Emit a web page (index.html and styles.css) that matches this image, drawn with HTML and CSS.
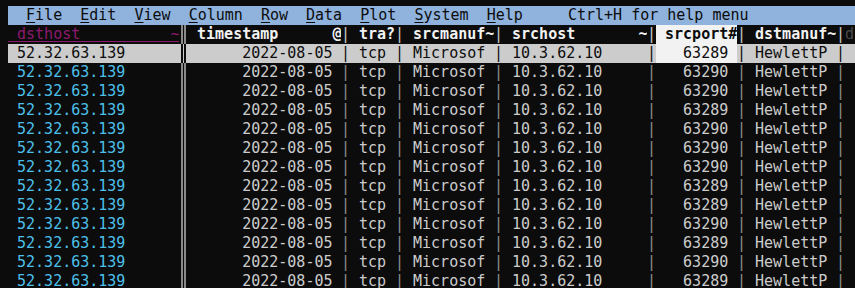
FILE: index.html
```html
<!DOCTYPE html>
<html lang="en">
<head>
    <meta charset="UTF-8">
    <title>vd packets.csv</title>
    <link rel="stylesheet" href="styles.css">
</head>
<body>
    <div class="menubar">  <u>F</u>ile  <u>E</u>dit  <u>V</u>iew  <u>C</u>olumn  <u>R</u>ow  <u>D</u>ata  <u>P</u>lot  <u>S</u>ystem  <u>H</u>elp     Ctrl+H for help menu</div>
    <div class="sheet">
        <div class="row header">
            <span class="key"> dsthost          ~</span><span class="keysep"></span><span> timestamp      @</span><span class="sep">|</span><span> tra?</span><span class="sep">|</span><span> srcmanuf~</span><span class="sep">|</span><span> srchost       ~</span><span class="sep">|</span><span class="cur"> srcport#</span><span class="sep">|</span><span> dstmanuf~</span><span class="sep">|</span><span class="more">d</span>
        </div>
        <div class="row selected">
            <span class="key"> 52.32.63.139</span><span class="keysep"></span><span>      2022-08-05 </span><span class="sep">|</span><span> tcp </span><span class="sep">|</span><span> Microsof </span><span class="sep">|</span><span> 10.3.62.10</span><span class="sep">|</span><span class="cur">   63289 </span><span class="sep">|</span><span> HewlettP </span><span class="sep">|</span><span></span>
        </div>
        <div class="row">
            <span class="key"> 52.32.63.139</span><span class="keysep"></span><span>      2022-08-05 </span><span class="sep">|</span><span> tcp </span><span class="sep">|</span><span> Microsof </span><span class="sep">|</span><span> 10.3.62.10</span><span class="sep">|</span><span>   63290 </span><span class="sep">|</span><span> HewlettP </span><span class="sep">|</span><span></span>
        </div>
        <div class="row">
            <span class="key"> 52.32.63.139</span><span class="keysep"></span><span>      2022-08-05 </span><span class="sep">|</span><span> tcp </span><span class="sep">|</span><span> Microsof </span><span class="sep">|</span><span> 10.3.62.10</span><span class="sep">|</span><span>   63290 </span><span class="sep">|</span><span> HewlettP </span><span class="sep">|</span><span></span>
        </div>
        <div class="row">
            <span class="key"> 52.32.63.139</span><span class="keysep"></span><span>      2022-08-05 </span><span class="sep">|</span><span> tcp </span><span class="sep">|</span><span> Microsof </span><span class="sep">|</span><span> 10.3.62.10</span><span class="sep">|</span><span>   63289 </span><span class="sep">|</span><span> HewlettP </span><span class="sep">|</span><span></span>
        </div>
        <div class="row">
            <span class="key"> 52.32.63.139</span><span class="keysep"></span><span>      2022-08-05 </span><span class="sep">|</span><span> tcp </span><span class="sep">|</span><span> Microsof </span><span class="sep">|</span><span> 10.3.62.10</span><span class="sep">|</span><span>   63290 </span><span class="sep">|</span><span> HewlettP </span><span class="sep">|</span><span></span>
        </div>
        <div class="row">
            <span class="key"> 52.32.63.139</span><span class="keysep"></span><span>      2022-08-05 </span><span class="sep">|</span><span> tcp </span><span class="sep">|</span><span> Microsof </span><span class="sep">|</span><span> 10.3.62.10</span><span class="sep">|</span><span>   63290 </span><span class="sep">|</span><span> HewlettP </span><span class="sep">|</span><span></span>
        </div>
        <div class="row">
            <span class="key"> 52.32.63.139</span><span class="keysep"></span><span>      2022-08-05 </span><span class="sep">|</span><span> tcp </span><span class="sep">|</span><span> Microsof </span><span class="sep">|</span><span> 10.3.62.10</span><span class="sep">|</span><span>   63290 </span><span class="sep">|</span><span> HewlettP </span><span class="sep">|</span><span></span>
        </div>
        <div class="row">
            <span class="key"> 52.32.63.139</span><span class="keysep"></span><span>      2022-08-05 </span><span class="sep">|</span><span> tcp </span><span class="sep">|</span><span> Microsof </span><span class="sep">|</span><span> 10.3.62.10</span><span class="sep">|</span><span>   63289 </span><span class="sep">|</span><span> HewlettP </span><span class="sep">|</span><span></span>
        </div>
        <div class="row">
            <span class="key"> 52.32.63.139</span><span class="keysep"></span><span>      2022-08-05 </span><span class="sep">|</span><span> tcp </span><span class="sep">|</span><span> Microsof </span><span class="sep">|</span><span> 10.3.62.10</span><span class="sep">|</span><span>   63289 </span><span class="sep">|</span><span> HewlettP </span><span class="sep">|</span><span></span>
        </div>
        <div class="row">
            <span class="key"> 52.32.63.139</span><span class="keysep"></span><span>      2022-08-05 </span><span class="sep">|</span><span> tcp </span><span class="sep">|</span><span> Microsof </span><span class="sep">|</span><span> 10.3.62.10</span><span class="sep">|</span><span>   63290 </span><span class="sep">|</span><span> HewlettP </span><span class="sep">|</span><span></span>
        </div>
        <div class="row">
            <span class="key"> 52.32.63.139</span><span class="keysep"></span><span>      2022-08-05 </span><span class="sep">|</span><span> tcp </span><span class="sep">|</span><span> Microsof </span><span class="sep">|</span><span> 10.3.62.10</span><span class="sep">|</span><span>   63289 </span><span class="sep">|</span><span> HewlettP </span><span class="sep">|</span><span></span>
        </div>
        <div class="row">
            <span class="key"> 52.32.63.139</span><span class="keysep"></span><span>      2022-08-05 </span><span class="sep">|</span><span> tcp </span><span class="sep">|</span><span> Microsof </span><span class="sep">|</span><span> 10.3.62.10</span><span class="sep">|</span><span>   63290 </span><span class="sep">|</span><span> HewlettP </span><span class="sep">|</span><span></span>
        </div>
        <div class="row">
            <span class="key"> 52.32.63.139</span><span class="keysep"></span><span>      2022-08-05 </span><span class="sep">|</span><span> tcp </span><span class="sep">|</span><span> Microsof </span><span class="sep">|</span><span> 10.3.62.10</span><span class="sep">|</span><span>   63289 </span><span class="sep">|</span><span> HewlettP </span><span class="sep">|</span><span></span>
        </div>
    </div>
</body>
</html>
```

FILE: styles.css
```css
html, body {
    height: 100%;
}
body {
    margin: 0;
    padding: 6px 0 0 8px;
    box-sizing: border-box;
    background: #0c0c0c;
    color: #cccccc;
    font-family: 'DejaVu Sans Mono', 'Liberation Mono', monospace;
    font-size: 15px;
    line-height: 19px;
    overflow: hidden;
}
.menubar {
    height: 19px;
    background: #8fb3dd;
    color: #0c0c0c;
    white-space: pre;
}
.menubar u {
    text-decoration-thickness: 1px;
    text-underline-offset: 2px;
}
.row {
    display: grid;
    grid-template-columns: 171px 9px 153px 9px 45px 9px 90px 9px 144px 9px 81px 9px 90px 9px 1fr;
    height: 19px;
    white-space: pre;
}
.row > span {
    overflow: hidden;
}
.key {
    color: #4cc0ea;
}
.keysep {
    background: linear-gradient(to right,
        transparent 2px,
        #8a8a8a 2px, #8a8a8a 4px,
        transparent 4px, transparent 5px,
        #8a8a8a 5px, #8a8a8a 7px,
        transparent 7px);
}
.sep {
    color: #8c8c8c;
}
.header {
    color: #f2f2f2;
    font-weight: bold;
}
.header .key {
    color: #8c1a6e;
    font-weight: normal;
    background: linear-gradient(#8c1a6e, #8c1a6e) 0 16px / 100% 1px no-repeat;
}
.header .sep {
    color: #c8c8c8;
    font-weight: normal;
}
.header .more {
    color: #4a4a4a;
    font-weight: normal;
}
.cur {
    background: #f2f2f2;
    color: #0c0c0c;
}
.selected {
    background: #cccccc;
    color: #0c0c0c;
}
.selected .key,
.selected .sep {
    color: #0c0c0c;
}
.selected .keysep {
    background: linear-gradient(to right,
        transparent 2px,
        #0c0c0c 2px, #0c0c0c 4px,
        transparent 4px, transparent 5px,
        #0c0c0c 5px, #0c0c0c 7px,
        transparent 7px);
}
```
